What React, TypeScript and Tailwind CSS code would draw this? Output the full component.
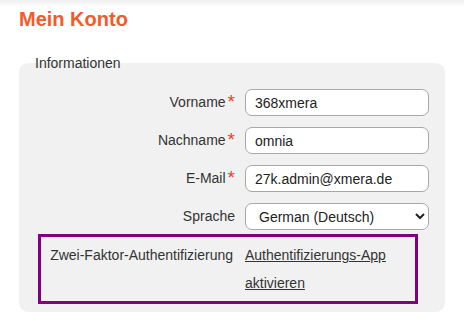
import React from "react";

const font = { fontFamily: '"Liberation Sans", Arial, sans-serif' };

function Row({ label, req, children }: { label: string; req?: boolean; children: React.ReactNode }) {
  return (
    <div className="flex items-center h-[27px]">
      <div className="w-[194px] flex justify-end items-center text-[14px] text-[#333]">
        <span>{label}</span>
        {req ? <span className="text-[#e8412c] text-[19px] leading-none ml-[2px] mt-[-2px]">*</span> : null}
      </div>
      <div className="ml-[10px] w-[184px]">{children}</div>
    </div>
  );
}

export default function App() {
  return (
    <div className="min-h-screen bg-white" style={font}>
      <div className="h-[7px] bg-gradient-to-b from-[#efefef] to-white" />
      <h1 className="pl-[19px] text-[20px] leading-[24px] font-bold text-[#f45a2c]">Mein Konto</h1>
      <fieldset className="mt-[24px] ml-[19px] w-[426px] bg-[#f1f1f1] rounded-[9px] px-4 pt-[18px] pb-[8px]">
        <legend className="text-[14px] leading-[16px] text-[#333]">Informationen</legend>
        <div className="ml-[6px] flex flex-col">
          <div className="flex flex-col gap-[11px]">
            <Row label="Vorname" req>
              <input defaultValue="368xmera" className="w-full h-[27px] rounded-[7px] border border-[#a8a8a8] bg-white px-[9px] text-[14px] text-[#222] outline-none" />
            </Row>
            <Row label="Nachname" req>
              <input defaultValue="omnia" className="w-full h-[27px] rounded-[7px] border border-[#a8a8a8] bg-white px-[9px] text-[14px] text-[#222] outline-none" />
            </Row>
            <Row label="E-Mail" req>
              <input defaultValue="27k.admin@xmera.de" className="w-full h-[27px] rounded-[7px] border border-[#a8a8a8] bg-white px-[9px] text-[14px] text-[#222] outline-none" />
            </Row>
            <Row label="Sprache">
              <select defaultValue="de" className="w-full h-[27px] rounded-[7px] border border-[#a8a8a8] bg-white px-[9px] text-[14px] text-[#222] outline-none">
                <option value="de">German (Deutsch)</option>
                <option value="en">English</option>
              </select>
            </Row>
          </div>
          <div className="mt-[4px] ml-[-3px] w-[380px] border-[3px] border-[#800080] flex py-[4px] text-[14px] leading-[28px] text-[#333]">
            <div className="w-[194px] pr-[2px] text-right">Zwei-Faktor-Authentifizierung</div>
            <div className="ml-[10px] w-[160px]">
              <a href="#" className="underline text-[#333]">Authentifizierungs-App<br />aktivieren</a>
            </div>
          </div>
        </div>
      </fieldset>
    </div>
  );
}
